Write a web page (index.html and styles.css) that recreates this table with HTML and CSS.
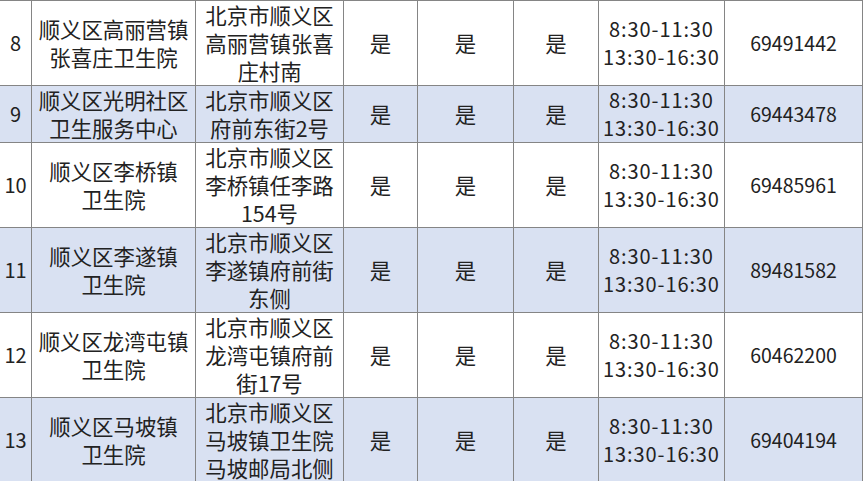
FILE: index.html
```html
<!DOCTYPE html>
<html lang="zh-CN">
<head>
<meta charset="utf-8">
<link rel="stylesheet" href="styles.css">
</head>
<body>
<table class="grid">
  <colgroup>
    <col class="c-no"><col class="c-name"><col class="c-addr"><col class="c-yes"><col class="c-yes2"><col class="c-yes3"><col class="c-time"><col class="c-tel">
  </colgroup>
  <tbody>
    <tr class="r-tall">
      <td class="num">8</td>
      <td>顺义区高丽营镇<br>张喜庄卫生院</td>
      <td>北京市顺义区<br>高丽营镇张喜<br>庄村南</td>
      <td>是</td><td>是</td><td>是</td>
      <td class="time">8:30-11:30<br>13:30-16:30</td>
      <td class="tel">69491442</td>
    </tr>
    <tr class="r-short alt">
      <td class="num">9</td>
      <td>顺义区光明社区<br>卫生服务中心</td>
      <td>北京市顺义区<br>府前东街2号</td>
      <td>是</td><td>是</td><td>是</td>
      <td class="time">8:30-11:30<br>13:30-16:30</td>
      <td class="tel">69443478</td>
    </tr>
    <tr class="r-tall">
      <td class="num">10</td>
      <td>顺义区李桥镇<br>卫生院</td>
      <td>北京市顺义区<br>李桥镇任李路<br>154号</td>
      <td>是</td><td>是</td><td>是</td>
      <td class="time">8:30-11:30<br>13:30-16:30</td>
      <td class="tel">69485961</td>
    </tr>
    <tr class="r-mid alt">
      <td class="num">11</td>
      <td>顺义区李遂镇<br>卫生院</td>
      <td>北京市顺义区<br>李遂镇府前街<br>东侧</td>
      <td>是</td><td>是</td><td>是</td>
      <td class="time">8:30-11:30<br>13:30-16:30</td>
      <td class="tel">89481582</td>
    </tr>
    <tr class="r-tall">
      <td class="num">12</td>
      <td>顺义区龙湾屯镇<br>卫生院</td>
      <td>北京市顺义区<br>龙湾屯镇府前<br>街17号</td>
      <td>是</td><td>是</td><td>是</td>
      <td class="time">8:30-11:30<br>13:30-16:30</td>
      <td class="tel">60462200</td>
    </tr>
    <tr class="r-mid alt">
      <td class="num">13</td>
      <td>顺义区马坡镇<br>卫生院</td>
      <td>北京市顺义区<br>马坡镇卫生院<br>马坡邮局北侧</td>
      <td>是</td><td>是</td><td>是</td>
      <td class="time">8:30-11:30<br>13:30-16:30</td>
      <td class="tel">69404194</td>
    </tr>
  </tbody>
</table>
</body>
</html>
```
FILE: styles.css
```css
html, body {
  margin: 0;
  padding: 0;
  background: #ffffff;
  overflow: hidden;
}

.grid {
  margin-left: -1px;
  border-collapse: separate;
  border-spacing: 1px;
  background: #858585;
  table-layout: fixed;
  font-family: "Noto Sans CJK SC", "Noto Sans", sans-serif;
  font-size: 21.4px;
  line-height: 28px;
  color: #222222;
}

.c-no { width: 31px; }
.c-name { width: 163px; }
.c-addr { width: 147px; }
.c-yes { width: 73px; }
.c-yes2 { width: 95px; }
.c-yes3 { width: 84px; }
.c-time { width: 125px; }
.c-tel { width: 137px; }

.grid td {
  padding: 0;
  background: #ffffff;
  text-align: center;
  vertical-align: middle;
  white-space: nowrap;
}

.grid tr.alt td {
  background: #d9e1f2;
}

.r-tall td { height: 84px; }
.r-short td { height: 55px; }
.r-mid td { height: 83px; }

.grid td.num {
  font-size: 20px;
}

.grid td.time {
  font-size: 20px;
  letter-spacing: 0.9px;
}

.grid td.tel {
  font-size: 19.5px;
}
```
